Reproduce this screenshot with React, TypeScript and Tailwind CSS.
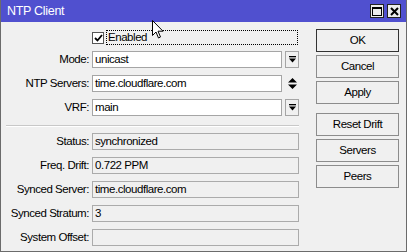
export default function App() {
  return (
    <div
      className="flex h-[252px] w-[407px] flex-col border-x border-b border-[#6b6b6b] bg-[#f0f0f0] text-[11.5px] leading-none tracking-[-0.45px] text-black"
      style={{ fontFamily: '"Liberation Sans", Arial, sans-serif' }}
    >
      <TitleBar />
      <div className="relative flex flex-1">
        <div className="flex w-[298px] flex-col pt-[8px]">
          <div className="flex h-[15px] items-center">
            <div className="w-[91px]" />
            <Checkbox />
            <div className="ml-[2px] mr-[1px] flex h-[15px] flex-1 items-center border border-dotted border-black pl-[1px]">
              Enabled
            </div>
          </div>
          <div className="mt-[6px] flex flex-col gap-[7px]">
            <Row label="Mode:" value="unicast" button="drop" />
            <Row label="NTP Servers:" value="time.cloudflare.com" button="updown" />
            <Row label="VRF:" value="main" button="drop" />
          </div>
          <div className="ml-[5px] mt-[9px] h-[2px] border-b border-t border-b-white border-t-[#c8c8c8]" />
          <div className="mt-[6px] flex flex-col gap-[7px]">
            <Row label="Status:" value="synchronized" readOnly />
            <Row label="Freq. Drift:" value="0.722 PPM" readOnly />
            <Row label="Synced Server:" value="time.cloudflare.com" readOnly />
            <Row label="Synced Stratum:" value="3" readOnly />
            <Row label="System Offset:" value="" readOnly />
          </div>
        </div>
        <div className="ml-[17px] flex w-[83px] flex-col pt-[7px]">
          <Btn primary>OK</Btn>
          <Btn>Cancel</Btn>
          <Btn>Apply</Btn>
          <div className="h-[6px]" />
          <Btn>Reset Drift</Btn>
          <Btn>Servers</Btn>
          <Btn>Peers</Btn>
        </div>
        <Cursor />
      </div>
    </div>
  );
}

function TitleBar() {
  return (
    <div className="flex h-[22px] items-center bg-[#5050cf] pl-[6px] pr-[5px] tracking-normal text-white">
      <span className="text-[12.5px] tracking-[-0.3px]">NTP Client</span>
      <div className="ml-auto flex gap-[3px]">
        <div className="flex h-[14px] w-[14px] items-center justify-center border border-[#222] bg-[#ececec]">
          <div className="h-[9px] w-[10px] border border-t-2 border-black" />
        </div>
        <div className="flex h-[14px] w-[14px] items-center justify-center border border-[#222] bg-[#ececec]">
          <svg width="9" height="9" viewBox="0 0 9 9">
            <path d="M1 1 L8 8 M8 1 L1 8" stroke="#000" strokeWidth="2" />
          </svg>
        </div>
      </div>
    </div>
  );
}

function Checkbox() {
  return (
    <div className="flex h-[12px] w-[12px] items-center justify-center border border-[#555] bg-white">
      <svg width="9" height="8" viewBox="0 0 9 8">
        <path d="M1 4 L3.5 6.5 L8 1" fill="none" stroke="#000" strokeWidth="1.8" />
      </svg>
    </div>
  );
}

function Row({
  label,
  value,
  button,
  readOnly,
}: {
  label: string;
  value: string;
  button?: "drop" | "updown";
  readOnly?: boolean;
}) {
  return (
    <div className="flex h-[17px] items-center">
      <div className="w-[88px] whitespace-nowrap text-right">{label}</div>
      <div
        className={
          "ml-[3px] flex h-[17px] flex-1 items-center whitespace-nowrap border pl-[2px] " +
          (readOnly ? "border-[#ababab] bg-[#f0f0f0]" : "border-[#a5a5a5] bg-white")
        }
      >
        {value}
      </div>
      {button === "drop" && (
        <div className="ml-[3px] flex h-[17px] w-[14px] items-center justify-center border border-[#a5a5a5] bg-[#f0f0f0]">
          <svg width="7" height="7" viewBox="0 0 7 7">
            <rect x="0" y="0" width="7" height="1.3" fill="#000" />
            <path d="M0 2.5 H7 L3.5 6.5 Z" fill="#000" />
          </svg>
        </div>
      )}
      {button === "updown" && (
        <div className="ml-[3px] flex h-[17px] w-[14px] items-center justify-center">
          <svg width="9" height="11" viewBox="0 0 9 11">
            <path d="M4.5 0 L9 4.5 H0 Z M0 6.5 H9 L4.5 11 Z" fill="#000" />
          </svg>
        </div>
      )}
    </div>
  );
}

function Btn({ children, primary }: { children: React.ReactNode; primary?: boolean }) {
  return (
    <div
      className={
        "mb-[3px] flex h-[23px] items-center justify-center border bg-[#f0f0f0] " +
        (primary ? "border-[#333]" : "border-[#8c8c8c]")
      }
    >
      {children}
    </div>
  );
}

function Cursor() {
  return (
    <svg
      className="absolute left-[151px] top-[-2px]"
      width="12"
      height="19"
      viewBox="0 0 12 19"
    >
      <path
        d="M0.5 0.5 V15.5 L4 12 L6.5 18 L8.5 17 L6 11.2 H11 Z"
        fill="#fff"
        stroke="#000"
        strokeWidth="1"
      />
    </svg>
  );
}
